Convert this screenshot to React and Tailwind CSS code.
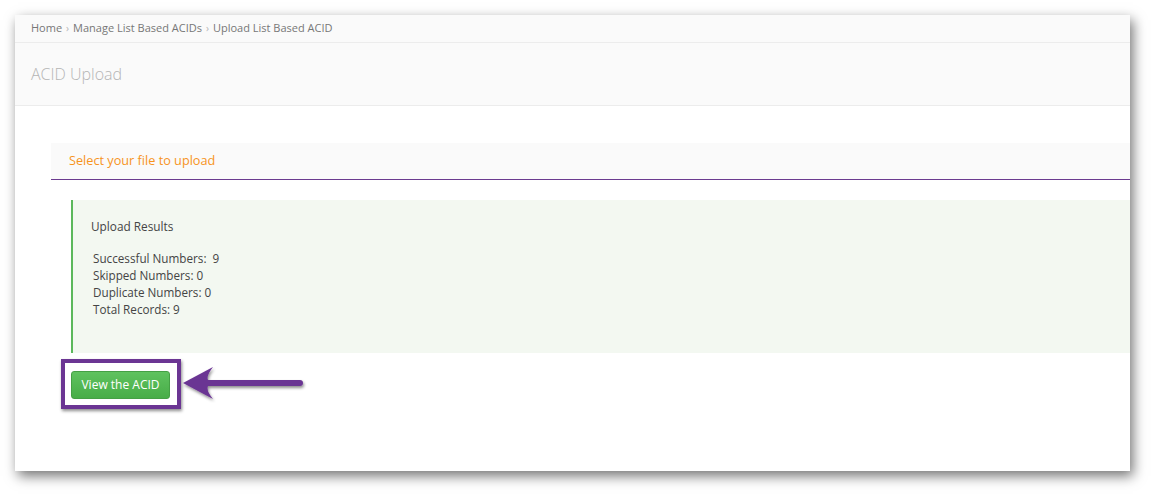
import React from 'react';

const results = [
  'Successful Numbers:  9',
  'Skipped Numbers: 0',
  'Duplicate Numbers: 0',
  'Total Records: 9',
];

const App = () => {
  return (
    <div className="w-[1155px] h-[496px] bg-white p-[15px] font-['Open_Sans',sans-serif]">
      <div className="w-[1115px] h-[456px] bg-white overflow-hidden shadow-[3px_5px_12px_rgba(0,0,0,0.55)]">
        {/* Breadcrumb */}
        <div className="h-[28px] bg-[#fafafa] border-b border-[#ececec] pl-4 flex items-center text-[11px] text-[#777]">
          <span>Home</span>
          <span className="mx-[4px] text-[10px] text-[#b5b5b5]">›</span>
          <span>Manage List Based ACIDs</span>
          <span className="mx-[4px] text-[10px] text-[#b5b5b5]">›</span>
          <span>Upload List Based ACID</span>
        </div>

        {/* Title */}
        <div className="h-[63px] bg-[#fafafa] border-b border-[#ececec] pl-4 flex items-center">
          <h1 className="text-[16px] font-light text-[#b5b5b5]">ACID Upload</h1>
        </div>

        <div className="pt-[37px] pl-[36px]">
          {/* Section header */}
          <div className="h-[37px] bg-[#fafafa] border-b border-[#6b3a8f] pl-[18px] flex items-center">
            <span className="text-[12.7px] text-[#f7941d]">Select your file to upload</span>
          </div>

          <div className="pl-[20px]">
            {/* Results */}
            <div className="mt-[20px] h-[153px] bg-[#f3f8f1] border-l-2 border-[#5cb85c] pl-[18px] pt-[18px]">
              <div className="text-[11.8px] text-[#444]">Upload Results</div>
              <div className="mt-[14px] pl-[2px] text-[11.7px] leading-[17px] text-[#444]">
                {results.map((r) => (
                  <div key={r} className="whitespace-pre">{r}</div>
                ))}
              </div>
            </div>

            {/* Button with annotation */}
            <div className="relative mt-[18px] w-[99px] h-[28px]">
              <div className="absolute -left-[10px] -top-[12px] w-[120px] h-[50px] border-[4px] border-[#6b3593] shadow-[1px_2px_3px_rgba(0,0,0,0.45)]"></div>
              <button className="relative w-[99px] h-[28px] rounded-[3px] border border-[#45a045] bg-gradient-to-b from-[#5fc25f] to-[#48ad48] text-white text-[12px] font-medium">
                View the ACID
              </button>
              <svg
                className="absolute left-[110px] -top-[7px]"
                width="130"
                height="42"
                viewBox="0 0 130 42"
                style={{ overflow: 'visible' }}
              >
                <defs>
                  <filter id="ash" x="-10%" y="-30%" width="130%" height="170%">
                    <feDropShadow dx="1" dy="2" stdDeviation="1.5" floodColor="#000" floodOpacity="0.45" />
                  </filter>
                </defs>
                <path
                  d="M2 19 L32 3 Q25 12 27 16 L119 16 A3 3 0 0 1 119 22 L27 22 Q25 27 32 35 Z"
                  fill="#6b3593"
                  filter="url(#ash)"
                />
              </svg>
            </div>
          </div>
        </div>
      </div>
    </div>
  );
};

export default App;
